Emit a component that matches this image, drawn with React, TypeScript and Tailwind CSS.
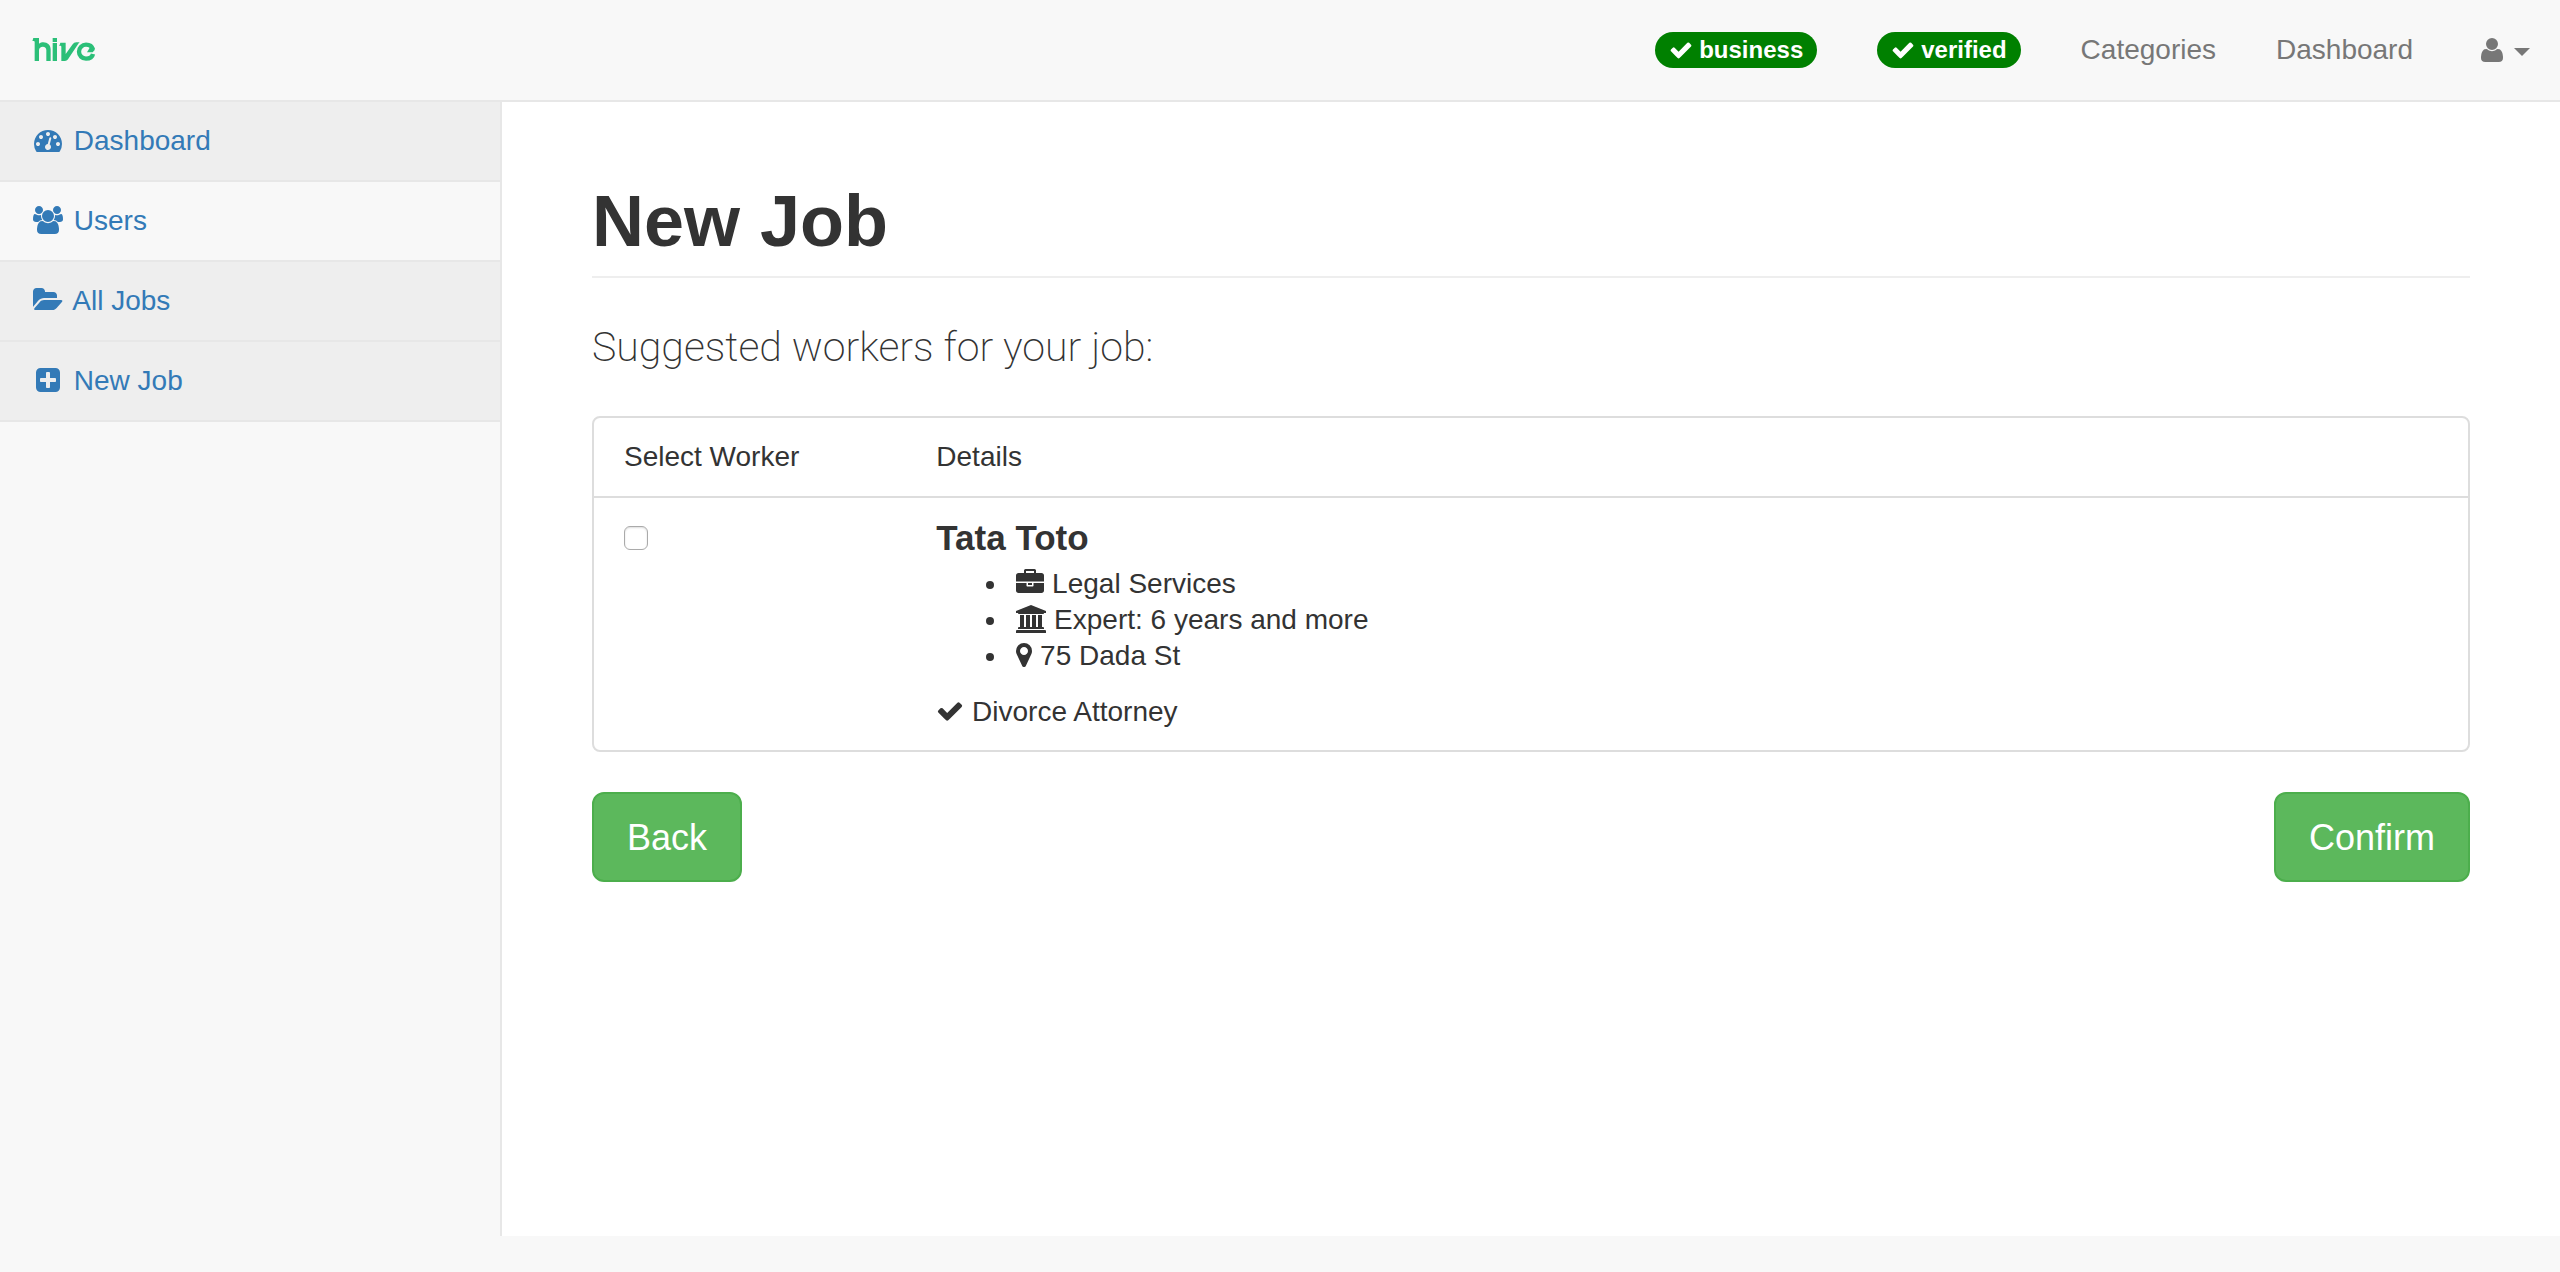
import type { ReactNode } from "react";

type IconProps = { d: string; width?: number; className: string };

/* Glyph on a 1792-unit em square; wider or narrower glyphs pass their own advance width. */
function Icon({ d, width = 1792, className }: IconProps) {
  return (
    <svg viewBox={`0 0 ${width} 1792`} className={`inline-block fill-current ${className}`} aria-hidden="true">
      <path d={d} />
    </svg>
  );
}

const CHECK =
  "M1671 566q0 40-28 68l-724 724-136 136q-28 28-68 28t-68-28l-136-136-362-362q-28-28-28-68t28-68l136-136q28-28 68-28t68 28l294 295 656-657q28-28 68-28t68 28l136 136q28 28 28 68z";
const USER =
  "M1408 1405q0 120-73 189.5t-194 69.5h-874q-121 0-194-69.5t-73-189.5q0-53 3.5-103.5t14-109 26.5-108.5 43-97.5 62-81 85.5-53.5 111.5-20q9 0 42 21.5t74.5 48 108 48 133.5 21.5 133.5-21.5 108-48 74.5-48 42-21.5q61 0 111.5 20t85.5 53.5 62 81 43 97.5 26.5 108.5 14 109 3.5 103.5zm-320-893q0 159-112.5 271.5t-271.5 112.5-271.5-112.5-112.5-271.5 112.5-271.5 271.5-112.5 271.5 112.5 112.5 271.5z";
const PLUS_SQUARE =
  "M1408 960v-128q0-26-19-45t-45-19h-320v-320q0-26-19-45t-45-19h-128q-26 0-45 19t-19 45v320h-320q-26 0-45 19t-19 45v128q0 26 19 45t45 19h320v320q0 26 19 45t45 19h128q26 0 45-19t19-45v-320h320q26 0 45-19t19-45zm256-544v960q0 119-84.5 203.5t-203.5 84.5h-960q-119 0-203.5-84.5t-84.5-203.5v-960q0-119 84.5-203.5t203.5-84.5h960q119 0 203.5 84.5t84.5 203.5z";
const MAP_MARKER =
  "M768 640q0-106-75-181t-181-75-181 75-75 181 75 181 181 75 181-75 75-181zm256 0q0 109-33 179l-364 774q-16 33-47.5 52t-67.5 19-67.5-19-46.5-52l-365-774q-33-70-33-179 0-212 150-362t362-150 362 150 150 362z";
const FOLDER_OPEN =
  "M1879 952q0 31-31 66l-336 396q-43 51-120.5 86.5t-143.5 35.5h-1088q-34 0-60.5-13t-26.5-43q0-31 31-66l336-396q43-51 120.5-86.5t143.5-35.5h1088q34 0 60.5 13t26.5 43zm-343-344v160h-832q-94 0-197 47.5t-164 119.5l-337 396-5 6q0-4-.5-12.5t-.5-12.5v-960q0-92 66-158t158-66h320q92 0 158 66t66 158v32h544q92 0 158 66t66 158z";
const GAUGE =
  "M384 1152q0-53-37.5-90.5t-90.5-37.5-90.5 37.5-37.5 90.5 37.5 90.5 90.5 37.5 90.5-37.5 37.5-90.5zm192-448q0-53-37.5-90.5t-90.5-37.5-90.5 37.5-37.5 90.5 37.5 90.5 90.5 37.5 90.5-37.5 37.5-90.5zm428 481l101-382q6-26-7.5-48.5t-38.5-29.5-48 6.5-30 39.5l-101 382q-60 5-107 43.5t-63 98.5q-20 77 20 146t117 89 146-20 89-117q16-60-6-117t-72-91zm660-33q0-53-37.5-90.5t-90.5-37.5-90.5 37.5-37.5 90.5 37.5 90.5 90.5 37.5 90.5-37.5 37.5-90.5zm-640-640q0-53-37.5-90.5t-90.5-37.5-90.5 37.5-37.5 90.5 37.5 90.5 90.5 37.5 90.5-37.5 37.5-90.5zm448 192q0-53-37.5-90.5t-90.5-37.5-90.5 37.5-37.5 90.5 37.5 90.5 90.5 37.5 90.5-37.5 37.5-90.5zm320 448q0 261-141 483-19 29-54 29h-1402q-35 0-54-29-141-221-141-483 0-182 71-348t191-286 286-191 348-71 348 71 286 191 191 286 71 348z";
const USERS =
  "M593 896q-162 5-265 128h-134q-82 0-138-40.5t-56-118.5q0-353 124-353 6 0 43.5 21t97.5 42.5 119 21.5q67 0 133-23-5 37-5 66 0 139 81 256zm1071 637q0 120-73 189.5t-194 69.5h-874q-121 0-194-69.5t-73-189.5q0-53 3.5-103.5t14-109 26.5-108.5 43-97.5 62-81 85.5-53.5 111.5-20q10 0 43 21.5t73 48 107 48 135 21.5 135-21.5 107-48 73-48 43-21.5q61 0 111.5 20t85.5 53.5 62 81 43 97.5 26.5 108.5 14 109 3.5 103.5zm-1024-1277q0 106-75 181t-181 75-181-75-75-181 75-181 181-75 181 75 75 181zm704 384q0 159-112.5 271.5t-271.5 112.5-271.5-112.5-112.5-271.5 112.5-271.5 271.5-112.5 271.5 112.5 112.5 271.5zm576 225q0 78-56 118.5t-138 40.5h-134q-103-123-265-128 81-117 81-256 0-29-5-66 66 23 133 23 59 0 119-21.5t97.5-42.5 43.5-21q124 0 124 353zm-128-609q0 106-75 181t-181 75-181-75-75-181 75-181 181-75 181 75 75 181z";
const BRIEFCASE =
  "M640 256h512v-128h-512v128zm1152 640v480q0 66-47 113t-113 47h-1472q-66 0-113-47t-47-113v-480h672v160q0 26 19 45t45 19h320q26 0 45-19t19-45v-160h672zm-768 0v128h-256v-128h256zm768-480v384h-1792v-384q0-66 47-113t113-47h352v-160q0-40 28-68t68-28h576q40 0 68 28t28 68v160h352q66 0 113 47t47 113z";
const BANK =
  "M960 0l960 384v128h-128q0 26-20.5 45t-48.5 19h-1526q-28 0-48.5-19t-20.5-45h-128v-128zm-704 640h256v768h128v-768h256v768h128v-768h256v768h128v-768h256v768h59q28 0 48.5 19t20.5 45v64h-1664v-64q0-26 20.5-45t48.5-19h59v-768zm1595 960q28 0 48.5 19t20.5 45v128h-1920v-128q0-26 20.5-45t48.5-19h1782z";

function Logo() {
  return (
    <svg viewBox="96 114 192 72" className="h-6 w-16" role="img" aria-label="hive">
      <g fill="#2bbf78">
        <path d="M100 114H117V131C121 128 126 127 130 127C143 127 152 136 152 149V183H139V151C139 144 135 140 128.500 140C122 140 117 144 117 151V183H104V126C104 124 103 123 101 123H97C98 121 99 119 99 117Z" />
        <rect x="158" y="114" width="13" height="12" />
        <rect x="158" y="129" width="13" height="54" />
        <path d="M181 128H197V162L218 133C221 129 224 127 229 127H239C237 129 235 131 233 134L204 178C201 182 199 183 195 183H184V140C184 138 183 137 181 137H177C179 135 180 132 181 128Z" />
        <path d="M261 157L271 140L284 143L284 150L278 157Z" />
      </g>
      <path
        d="M278 148C276 139 268 134 258 134A21 21 0 1 0 258 176C269 176 277 171 279 162"
        fill="none"
        stroke="#2bbf78"
        strokeWidth="13"
      />
    </svg>
  );
}

function Badge({ children }: { children: ReactNode }) {
  return (
    <span className="flex items-center gap-1.5 rounded-full bg-[#008000] px-3.5 py-1.5 text-2xl leading-6 font-bold text-white">
      <Icon d={CHECK} className="size-6" />
      {children}
    </span>
  );
}

const navItems = [
  { label: "Dashboard", d: GAUGE, width: 1792, size: "w-7", shaded: true },
  { label: "Users", d: USERS, width: 1920, size: "w-[30px]", shaded: false },
  { label: "All Jobs", d: FOLDER_OPEN, width: 1920, size: "w-[30px]", shaded: true },
  { label: "New Job", d: PLUS_SQUARE, width: 1792, size: "w-7", shaded: true },
];

const details = [
  { label: "Legal Services", d: BRIEFCASE, width: 1792, size: "w-7" },
  { label: "Expert: 6 years and more", d: BANK, width: 1920, size: "w-[30px]" },
  { label: "75 Dada St", d: MAP_MARKER, width: 1024, size: "w-4" },
];

const buttonClass =
  "cursor-pointer rounded-xl border-2 border-[#4cae4c] bg-[#5cb85c] px-[33px] pt-[21px] pb-[19px] text-4xl leading-[46px] text-white";

export default function App() {
  return (
    <div className="flex min-h-screen flex-col bg-[#f8f8f8] pb-9 font-['Helvetica_Neue','Liberation_Sans',Arial,sans-serif] text-[28px] leading-10 text-[#333]">
      <header className="flex items-center justify-between border-b-2 border-[#e7e7e7] px-[30px]">
        <a href="#home" className="pl-0.5">
          <Logo />
        </a>
        <nav className="flex items-center gap-[60px] py-[30px] text-[#777]">
          <Badge>business</Badge>
          <Badge>verified</Badge>
          <a href="#categories">Categories</a>
          <a href="#dashboard">Dashboard</a>
          <button type="button" aria-label="Account menu" className="ml-2 flex cursor-pointer items-center gap-[11px]">
            <Icon d={USER} width={1408} className="h-7 w-[22px]" />
            <svg viewBox="0 0 16 8" className="mt-1 h-2 w-4 fill-current" aria-hidden="true">
              <path d="M0 0h16L8 8z" />
            </svg>
          </button>
        </nav>
      </header>

      <div className="flex grow">
        <aside className="w-[500px] shrink-0">
          <ul>
            {navItems.map((item) => (
              <li key={item.label} className={`border-b-2 border-[#e7e7e7] ${item.shaded ? "bg-[#eee]" : ""}`}>
                <a href="#" className="block px-[30px] py-[19px] text-[#337ab7]">
                  <span className="inline-block w-9 text-center">
                    <Icon d={item.d} width={item.width} className={`h-7 align-[-4px] ${item.size}`} />
                  </span>{" "}
                  {item.label}
                </a>
              </li>
            ))}
          </ul>
        </aside>

        <main className="grow border-l-2 border-[#e7e7e7] bg-white px-[90px] pt-20">
          <h1 className="border-b-2 border-[#eee] pb-4 text-7xl leading-[78px] font-bold">New Job</h1>
          <p className="mt-10 font-['Roboto',sans-serif] text-[41px] leading-[58px] font-extralight">
            Suggested workers for your job:
          </p>

          <div className="mt-10 rounded-lg border-2 border-[#ddd]">
            <table className="w-full table-fixed text-left">
              <thead>
                <tr className="border-b-2 border-[#ddd]">
                  <th className="w-1/6 px-[30px] py-[19px] font-normal">Select Worker</th>
                  <th className="px-[30px] py-[19px] font-normal">Details</th>
                </tr>
              </thead>
              <tbody>
                <tr className="align-top">
                  <td className="px-[30px] py-5">
                    <input
                      type="checkbox"
                      aria-label="Select Tata Toto"
                      className="mt-2 block size-6 appearance-none rounded-md border border-[#aaa] bg-white shadow-[inset_0_1px_2px_#ddd] checked:bg-[#337ab7]"
                    />
                  </td>
                  <td className="px-[30px] py-5 leading-9">
                    <h2 className="text-[35px] leading-10 font-bold">Tata Toto</h2>
                    <ul className="mt-2 mb-5 list-disc pl-[73px]">
                      {details.map((item) => (
                        <li key={item.label} className="pl-[7px]">
                          <Icon d={item.d} width={item.width} className={`h-7 align-[-4px] ${item.size}`} /> {item.label}
                        </li>
                      ))}
                    </ul>
                    <p>
                      <Icon d={CHECK} className="size-7 align-[-4px]" /> Divorce Attorney
                    </p>
                  </td>
                </tr>
              </tbody>
            </table>
          </div>

          <div className="mt-10 flex justify-between">
            <button type="button" className={buttonClass}>
              Back
            </button>
            <button type="button" className={buttonClass}>
              Confirm
            </button>
          </div>
        </main>
      </div>
    </div>
  );
}
